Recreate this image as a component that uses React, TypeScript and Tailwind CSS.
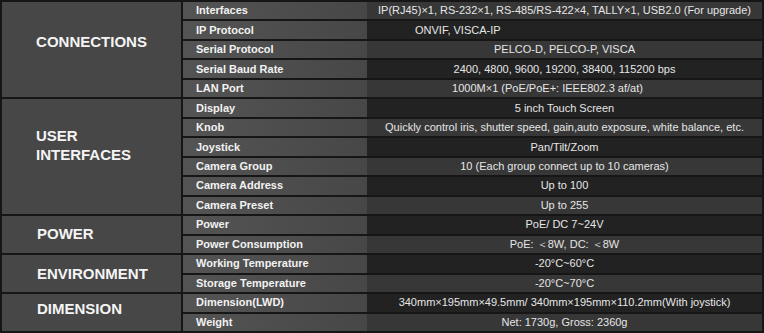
import React from "react";

type Row = { label: string; value: string; cls?: string };

const rows: Row[] = [
  { label: "Interfaces", value: "IP(RJ45)×1, RS-232×1, RS-485/RS-422×4, TALLY×1, USB2.0 (For upgrade)" },
  { label: "IP Protocol", value: "ONVIF, VISCA-IP", cls: "justify-start pl-[48px]" },
  { label: "Serial Protocol", value: "PELCO-D, PELCO-P, VISCA" },
  { label: "Serial Baud Rate", value: "2400, 4800, 9600, 19200, 38400, 115200 bps" },
  { label: "LAN Port", value: "1000M×1 (PoE/PoE+: IEEE802.3 af/at)", cls: "pr-[34px]" },
  { label: "Display", value: "5 inch Touch Screen" },
  { label: "Knob", value: "Quickly control iris, shutter speed, gain,auto exposure, white balance, etc." },
  { label: "Joystick", value: "Pan/Tilt/Zoom" },
  { label: "Camera Group", value: "10 (Each group connect up to 10 cameras)" },
  { label: "Camera Address", value: "Up to 100" },
  { label: "Camera Preset", value: "Up to 255" },
  { label: "Power", value: "PoE/ DC 7~24V" },
  { label: "Power Consumption", value: "PoE: ＜8W, DC: ＜8W" },
  { label: "Working Temperature", value: "-20°C~60°C" },
  { label: "Storage Temperature", value: "-20°C~70°C" },
  { label: "Dimension(LWD)", value: "340mm×195mm×49.5mm/ 340mm×195mm×110.2mm(With joystick)" },
  { label: "Weight", value: "Net: 1730g, Gross: 2360g" },
];

const sections = [
  { title: ["CONNECTIONS"], span: "row-span-5", start: "row-start-1", cls: "justify-center pb-[17px]" },
  { title: ["USER", "INTERFACES"], span: "row-span-6", start: "row-start-6", cls: "pl-[34px] pb-[24px]" },
  { title: ["POWER"], span: "row-span-2", start: "row-start-12", cls: "pl-[35px] pb-[2px]" },
  { title: ["ENVIRONMENT"], span: "row-span-2", start: "row-start-14", cls: "pl-[35px]" },
  { title: ["DIMENSION"], span: "row-span-2", start: "row-start-16", cls: "pl-[35px] pb-[8px]" },
];

const rowStarts = [
  "row-start-1", "row-start-2", "row-start-3", "row-start-4", "row-start-5", "row-start-6",
  "row-start-7", "row-start-8", "row-start-9", "row-start-10", "row-start-11", "row-start-12",
  "row-start-13", "row-start-14", "row-start-15", "row-start-16", "row-start-17",
];

export default function App() {
  return (
    <div
      className="w-[764px] h-[333px] bg-[#161616] p-[2px] overflow-hidden"
      style={{ fontFamily: '"Liberation Sans", Arial, sans-serif' }}
    >
      <div className="grid h-full grid-cols-[179px_1fr] grid-rows-17 gap-[2px]">
        {sections.map((s) => (
          <div
            key={s.title.join(" ")}
            className={`col-start-1 ${s.start} ${s.span} bg-[#474747] flex items-center ${s.cls}`}
          >
            <div className="text-[15px] font-bold text-[#f4f4f4] leading-[19px]">
              {s.title.map((t) => (
                <div key={t}>{t}</div>
              ))}
            </div>
          </div>
        ))}
        {rows.map((r, i) => (
          <div key={r.label} className={`col-start-2 ${rowStarts[i]} flex min-h-0`}>
            <div className="w-[184px] shrink-0 bg-gradient-to-r from-[#545454] to-[#474747] flex items-center pl-[13px] text-[11px] font-bold text-[#f2f2f2] leading-none">
              {r.label}
            </div>
            <div
              className={`flex-1 flex items-center justify-center text-[11px] text-[#e6e6e6] leading-none whitespace-nowrap ${
                i % 2 === 0 ? "bg-[#373737]" : "bg-[#222222]"
              } ${r.cls ?? ""}`}
            >
              {r.value}
            </div>
          </div>
        ))}
      </div>
    </div>
  );
}
